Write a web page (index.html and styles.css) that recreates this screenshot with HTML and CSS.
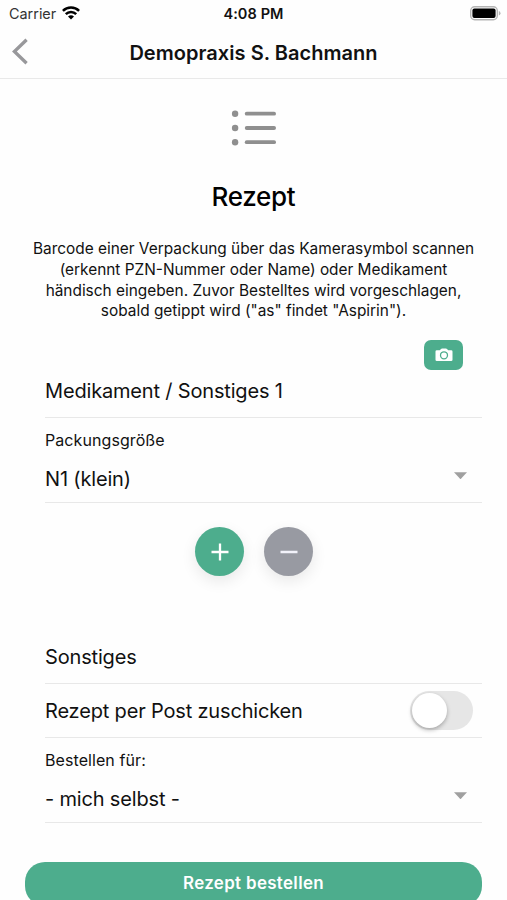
FILE: index.html
```html
<!DOCTYPE html>
<html lang="de">
<head>
<meta charset="utf-8">
<meta name="viewport" content="width=device-width, initial-scale=1">
<title>Rezept</title>
<link rel="stylesheet" href="styles.css">
</head>
<body>
<div class="screen">
  <div class="status">
    <div class="status-left">
      <span class="carrier">Carrier</span>
      <svg class="wifi" width="18" height="14" viewBox="0 0 18 14" fill="none" stroke="#000" stroke-width="2.5">
        <path d="M.9 4.900a11.500 11.500 0 0 1 16.200 0"/>
        <path d="M3.800 8.100a7.300 7.300 0 0 1 10.400 0"/>
        <path d="M9 13.600 6 10.600a4.300 4.300 0 0 1 6 0z" fill="#000" stroke="none"/>
      </svg>
    </div>
    <span class="time">4:08 PM</span>
    <svg class="battery" width="31" height="15" viewBox="0 0 31 15">
      <rect x=".7" y=".7" width="26.6" height="13.1" rx="4" fill="#fff" stroke="#b4b4b4" stroke-width="1.4"/>
      <rect x="2.4" y="2.4" width="23.2" height="9.7" rx="2" fill="#000"/>
      <path d="M28.8 5v4.5q1.7-.6 1.7-2.25T28.8 5z" fill="#b4b4b4"/>
    </svg>
  </div>
  <header class="nav">
    <svg class="back" width="17" height="27" viewBox="0 0 17 27" fill="none" stroke="#98989b" stroke-width="3.3"><path d="M14.6 1.7 2.4 13.5l12.200 11.800"/></svg>
    <h1 class="nav-title">Demopraxis S. Bachmann</h1>
  </header>
  <main class="content">
    <svg class="list-icon" width="46" height="38" viewBox="0 0 46 38" fill="#8f8f8f">
      <circle cx="4.1" cy="4.7" r="3.2"/><circle cx="4.1" cy="19" r="3.2"/><circle cx="4.1" cy="33.2" r="3.2"/>
      <rect x="13.8" y="2.8" width="31.2" height="3.8" rx="1.9"/><rect x="13.8" y="17.1" width="31.2" height="3.8" rx="1.9"/><rect x="13.8" y="31.3" width="31.2" height="3.8" rx="1.9"/>
    </svg>
    <h2 class="heading">Rezept</h2>
    <p class="intro">Barcode einer Verpackung über das Kamerasymbol scannen<br>(erkennt PZN-Nummer oder Name) oder Medikament<br>händisch eingeben. Zuvor Bestelltes wird vorgeschlagen,<br>sobald getippt wird ("as" findet "Aspirin").</p>
    <div class="camera-row">
      <button class="camera" aria-label="Kamera">
        <svg width="18" height="14" viewBox="0 0 18 14"><path fill="#fff" d="M1.8 2.2h3L6 .9Q6.4.5 7 .5h4q.6 0 1 .4l1.2 1.3h3q1.3 0 1.3 1.3v8.2q0 1.3-1.3 1.3H1.8Q.5 13 .5 11.700V3.500Q.5 2.200 1.800 2.200z"/><circle cx="9" cy="7.300" r="3.500" fill="none" stroke="#4dad8d" stroke-width="1.300"/></svg>
      </button>
    </div>
    <div class="field medication"><span class="value">Medikament / Sonstiges 1</span></div>
    <div class="field select">
      <span class="label">Packungsgröße</span>
      <div class="choice"><span class="value">N1 (klein)</span><i class="caret"></i></div>
    </div>
    <div class="round-row">
      <button class="round add" aria-label="Hinzufügen"><svg width="18" height="18" viewBox="0 0 18 18" stroke="#fff" stroke-width="2.300"><path d="M.5 9h17M9 .5v17"/></svg></button>
      <button class="round remove" aria-label="Entfernen"><svg width="18" height="18" viewBox="0 0 18 18" stroke="#f2f2fa" stroke-width="2.500"><path d="M.5 9h17"/></svg></button>
    </div>
    <div class="field other"><span class="value">Sonstiges</span></div>
    <div class="field post"><span class="value">Rezept per Post zuschicken</span><span class="toggle"><span class="knob"></span></span></div>
    <div class="field select">
      <span class="label">Bestellen für:</span>
      <div class="choice"><span class="value">- mich selbst -</span><i class="caret"></i></div>
    </div>
    <button class="submit">Rezept bestellen</button>
  </main>
</div>
</body>
</html>
```
FILE: styles.css
```css
* { box-sizing: border-box; }
body { margin: 0; background: #fefefe; color: #111; font-family: Inter, "Liberation Sans", sans-serif; }
button { border: 0; padding: 0; font: inherit; }
svg { display: block; flex: none; }
.screen { width: 507px; height: 900px; overflow: hidden; background: #fefefe; }
.status { height: 27px; padding: 0 6px 0 9px; display: grid; grid-template-columns: 1fr auto 1fr; align-items: center; }
.status-left { display: flex; align-items: center; gap: 6px; }
.wifi { margin-top: -2px; }
.carrier { font-size: 14.4px; line-height: 27px; color: #333; }
.time { margin-right: 3px; font-size: 14.5px; font-weight: 600; line-height: 27px; letter-spacing: .1px; }
.battery { justify-self: end; }
.nav { height: 52px; border-bottom: 1px solid #e9e9e9; display: grid; grid-template-columns: 29px 1fr 29px; align-items: center; }
.back { margin-left: 12px; margin-top: -2px; }
.nav-title { margin: 0; text-align: center; font-size: 20px; line-height: 50px; font-weight: 600; letter-spacing: .04px; white-space: nowrap; }
.content { display: flex; flex-direction: column; padding: 0 25px; }
.list-icon { margin: 30px 0 0 206px; }
.heading { margin: 32px 0 0; height: 36px; line-height: 36px; text-align: center; font-size: 26px; font-weight: 500; letter-spacing: -.3px; color: #000; }
.intro { margin: 24px 0 0; text-align: center; font-size: 15.4px; line-height: 20.8px; white-space: nowrap; }
.camera-row { display: flex; justify-content: flex-end; padding: 18px 19px 0 0; }
.camera { width: 39px; height: 30px; border-radius: 7px; background: #4dad8d; display: flex; align-items: center; justify-content: center; }
.field { margin-left: 20px; border-bottom: 1px solid #e8e8e8; white-space: nowrap; }
.value { font-size: 20px; line-height: 26px; letter-spacing: -.17px; }
.medication { height: 48px; padding-top: 8px; }
.select { height: 85px; padding-top: 11px; display: flex; flex-direction: column; }
.label { font-size: 16px; line-height: 22px; letter-spacing: .08px; }
.choice { margin-top: 15px; padding-right: 15px; display: flex; align-items: center; justify-content: space-between; }
.caret { width: 13px; height: 7px; margin-top: -7px; background: #a0a0a0; clip-path: polygon(0 0, 100% 0, 50% 100%); }
.round-row { display: flex; gap: 20px; margin: 24px 0 0 170px; }
.round { width: 49px; height: 49px; border-radius: 50%; display: flex; align-items: center; justify-content: center; box-shadow: 0 5px 15px rgba(0, 0, 0, .09); }
.add { background: #4dad8d; }
.remove { background: #989aa2; }
.other { height: 41px; margin-top: 67px; padding-top: 1px; }
.post { height: 54px; padding-right: 9px; display: flex; align-items: center; justify-content: space-between; }
.toggle { width: 63px; height: 39px; border-radius: 20px; background: #e6e6e6; padding: 2px; }
.knob { display: block; width: 35px; height: 35px; border-radius: 50%; background: #fff; box-shadow: 0 2px 4px rgba(0, 0, 0, .28); }
.submit { height: 44px; margin-top: 39px; padding-bottom: 2px; border-radius: 20px; background: #4dad8d; color: #fff; font-size: 16.9px; font-weight: 600; letter-spacing: .35px; }
```
